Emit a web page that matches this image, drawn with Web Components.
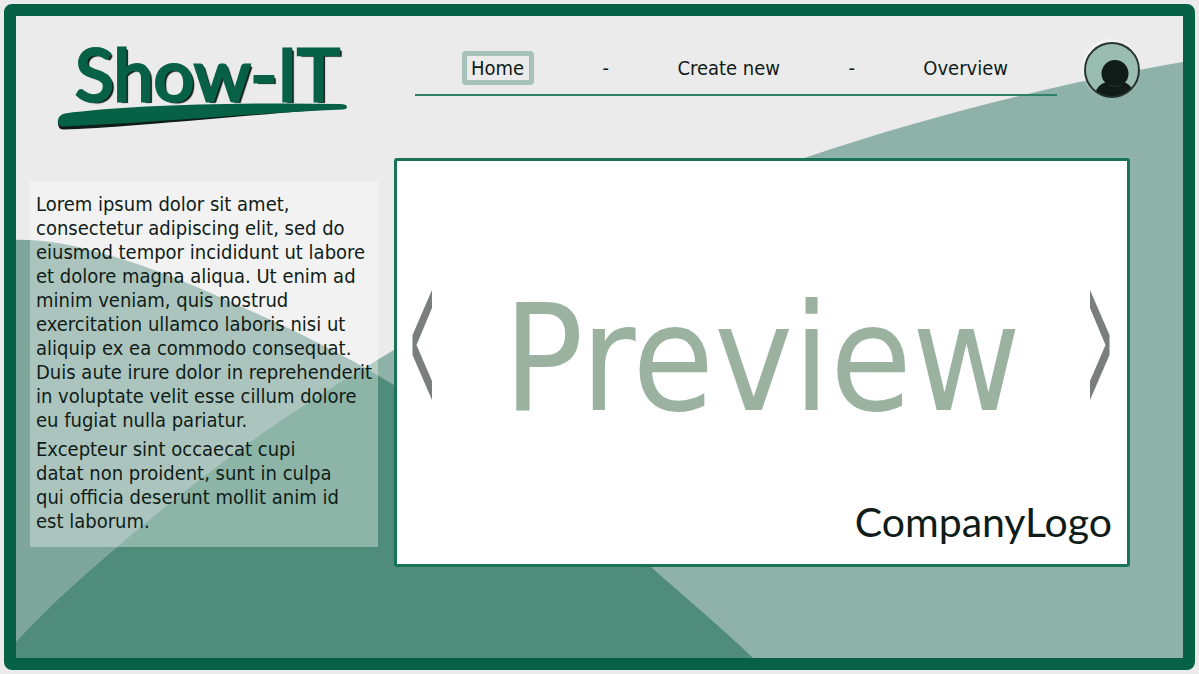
<!DOCTYPE html>
<html lang="en">
<head>
<meta charset="utf-8">
<meta name="viewport" content="width=device-width, initial-scale=1">
<title>Show-IT</title>
<style>
  :root {
    --ink: #101c17;
    --green: #066146;
    --line: #187455;
    --paper: #ebebeb;
    --display: Lato, "Gill Sans", sans-serif;
  }
  body {
    margin: 0;
    background: var(--paper);
    color: var(--ink);
    font: 20px/24px "DejaVu Sans Condensed", Tahoma, "Noto Sans", sans-serif;
  }
</style>
</head>
<body>
<show-frame>
  <show-backdrop slot="backdrop"></show-backdrop>
  <show-logo slot="logo"></show-logo>
  <show-nav slot="nav"></show-nav>
  <show-avatar slot="user"></show-avatar>
  <show-note slot="aside">
    <p>Lorem ipsum dolor sit amet,<br>consectetur adipiscing elit, sed do<br>eiusmod tempor incididunt ut labore<br>et dolore magna aliqua. Ut enim ad<br>minim veniam, quis nostrud<br>exercitation ullamco laboris nisi ut<br>aliquip ex ea commodo consequat.<br>Duis aute irure dolor in reprehenderit<br>in voluptate velit esse cillum dolore<br>eu fugiat nulla pariatur.</p>
    <p>Excepteur sint occaecat cupi<br>datat non proident, sunt in culpa<br>qui officia deserunt mollit anim id<br>est laborum.</p>
  </show-note>
  <show-preview slot="preview">
    Preview
    <span slot="company">CompanyLogo</span>
  </show-preview>
</show-frame>

<script>
const define = (name, html) => {
  const template = document.createElement('template');
  template.innerHTML = html;
  customElements.define(name, class extends HTMLElement {
    constructor() {
      super();
      this.attachShadow({ mode: 'open' }).append(template.content.cloneNode(true));
    }
  });
};

define('show-frame', `
  <style>
    :host { display: flex; padding: 4px; box-sizing: border-box; min-height: 100vh; }
    .frame {
      flex: 1; min-width: 0; position: relative; isolation: isolate;
      border: 12px solid var(--green); border-radius: 8px;
    }
    header { display: grid; grid-template-columns: 366px 1fr 56px; padding: 22px 43px 0 33px; }
    ::slotted([slot=nav]) { margin-right: 27px; }
    ::slotted([slot=user]) { margin-top: 4px; }
    main {
      display: grid; grid-template-columns: 348px 1fr; gap: 16px;
      align-items: start; padding: 24px 53px 40px 14px;
    }
    ::slotted([slot=aside]) { margin-top: 23px; }
  </style>
  <div class="frame">
    <slot name="backdrop"></slot>
    <header><slot name="logo"></slot><slot name="nav"></slot><slot name="user"></slot></header>
    <main><slot name="aside"></slot><slot name="preview"></slot></main>
  </div>`);

define('show-backdrop', `
  <style>
    :host { position: absolute; inset: 0; z-index: -1; }
    svg { display: block; width: 100%; height: 100%; }
  </style>
  <svg viewBox="16 16 1167 643" preserveAspectRatio="none" aria-hidden="true">
    <defs>
      <path id="slope" d="M16 643C44 612 73 586 103 560C150 519 200 479 250 443C300 407 335 386 393 351C525 273 660 212 805 158C925 117 1060 83 1183 62V659H16Z"/>
      <clipPath id="on-slope"><use href="#slope"/></clipPath>
      <path id="hill" d="M16 240C50 240 75 246 100 253C160 269 220 297 287 328C325 346 360 365 393 385C490 441 570 497 650 567C686 599 720 627 753 659H16Z"/>
    </defs>
    <use href="#hill" fill="#7ea79b"/>
    <use href="#slope" fill="#8fb2a8"/>
    <use href="#hill" fill="#4f8c79" clip-path="url(#on-slope)"/>
  </svg>`);

define('show-logo', `
  <style>
    :host { display: block; }
    a { display: block; position: relative; height: 96px; color: var(--green); text-decoration: none; }
    span {
      position: relative; display: block; padding-left: 26px;
      font: 400 72px/70px var(--display);
      -webkit-text-stroke: 3px var(--green);
      text-shadow: 2px 1px 0 var(--ink), 3px 2px 1px var(--ink);
    }
    svg { position: absolute; left: 8px; bottom: 0; width: 292px; height: 32px; }
  </style>
  <a href="#home">
    <span>Show-IT</span>
    <svg viewBox="57 102 292 32" aria-hidden="true">
      <path fill="#101c17" d="M58 120Q57 129 63 129.500C100 129 200 120 280 113L346 108L300 105L62 116Z"/>
      <path fill="#066146" d="M58 121Q58 115 65 113.500C120 106 230 102 340 104Q347 104 347 107Q347 109 343 109.500C240 114 150 123 64 126.500Q58 127 58 121Z"/>
    </svg>
  </a>`);

define('show-nav', `
  <style>
    :host { display: block; }
    nav { border-bottom: 2px solid #2f8064; padding: 13px 49px 9px 47px; }
    ul { display: flex; justify-content: space-between; align-items: center; margin: 0; padding: 0; list-style: none; }
    li { white-space: nowrap; }
    a { color: inherit; text-decoration: none; }
    a[aria-current] { display: block; padding: 0 5px 0 4px; border: 5px solid #a7c2b8; border-radius: 4px; }
  </style>
  <nav aria-label="Main"><ul>
    <li><a href="#home" aria-current="page">Home</a></li>
    <li aria-hidden="true">-</li>
    <li><a href="#create">Create new</a></li>
    <li aria-hidden="true">-</li>
    <li><a href="#overview">Overview</a></li>
  </ul></nav>`);

define('show-avatar', `
  <style>
    :host { display: block; }
    button { display: block; width: 56px; height: 56px; padding: 0; border: 0; border-radius: 50%; background: none; box-shadow: -1px -2px 3px #f8f8f8; }
    svg { display: block; width: 56px; height: 56px; }
  </style>
  <button type="button" aria-label="Account">
    <svg viewBox="0 0 56 56">
      <clipPath id="disc"><circle cx="28" cy="28" r="27"/></clipPath>
      <circle cx="28" cy="28" r="27" fill="#9abdb2"/>
      <g clip-path="url(#disc)" fill="#101c17">
        <path d="M10 56C12 43 19 40 26 40H39C45 41 49 46 51 56Z"/>
        <circle cx="31" cy="31.500" r="13.500"/>
      </g>
      <path d="M25 43.500Q31 46 37 43" fill="none" stroke="#26342e" stroke-width="1"/>
      <circle cx="28" cy="28" r="27" fill="none" stroke="#27332e" stroke-width="2"/>
    </svg>
  </button>`);

define('show-note', `
  <style>
    :host { display: block; padding: 11px 6px 14px; background: rgb(255 255 255 / .35); white-space: nowrap; }
    ::slotted(p) { margin: 0; }
    ::slotted(p:not(:first-child)) { margin-top: 5px; }
  </style>
  <slot></slot>`);

define('show-preview', `
  <style>
    :host { display: block; }
    section {
      display: grid; grid-template: 368px 1fr / 24px 1fr 24px; align-items: center;
      box-sizing: border-box; border: 3px solid var(--line); border-radius: 3px; background: #fff; padding: 0 15px;
    }
    button { padding: 0; border: 0; background: none; height: 112px; }
    svg { display: block; width: 24px; height: 112px; fill: #7a7f7d; }
    h1 { margin: 0; padding-top: 27px; text-align: center; color: #9ab29f; font-weight: 400; font-size: 148px; line-height: 160px; }
    footer { grid-column: 1 / -1; text-align: right; font: 41px/52px var(--display); margin-top: -33px; padding-bottom: 16px; }
  </style>
  <section aria-label="Preview">
    <button type="button" aria-label="Previous"><svg viewBox="0 0 24 112"><path d="M20 1V19L4.500 56L20 92V111L0.500 66V46Z"/></svg></button>
    <h1><slot></slot></h1>
    <button type="button" aria-label="Next"><svg viewBox="0 0 24 112"><path d="M2 1V19L17.500 56L2 92V111L21.500 66V46Z"/></svg></button>
    <footer><slot name="company"></slot></footer>
  </section>`);
</script>
</body>
</html>
